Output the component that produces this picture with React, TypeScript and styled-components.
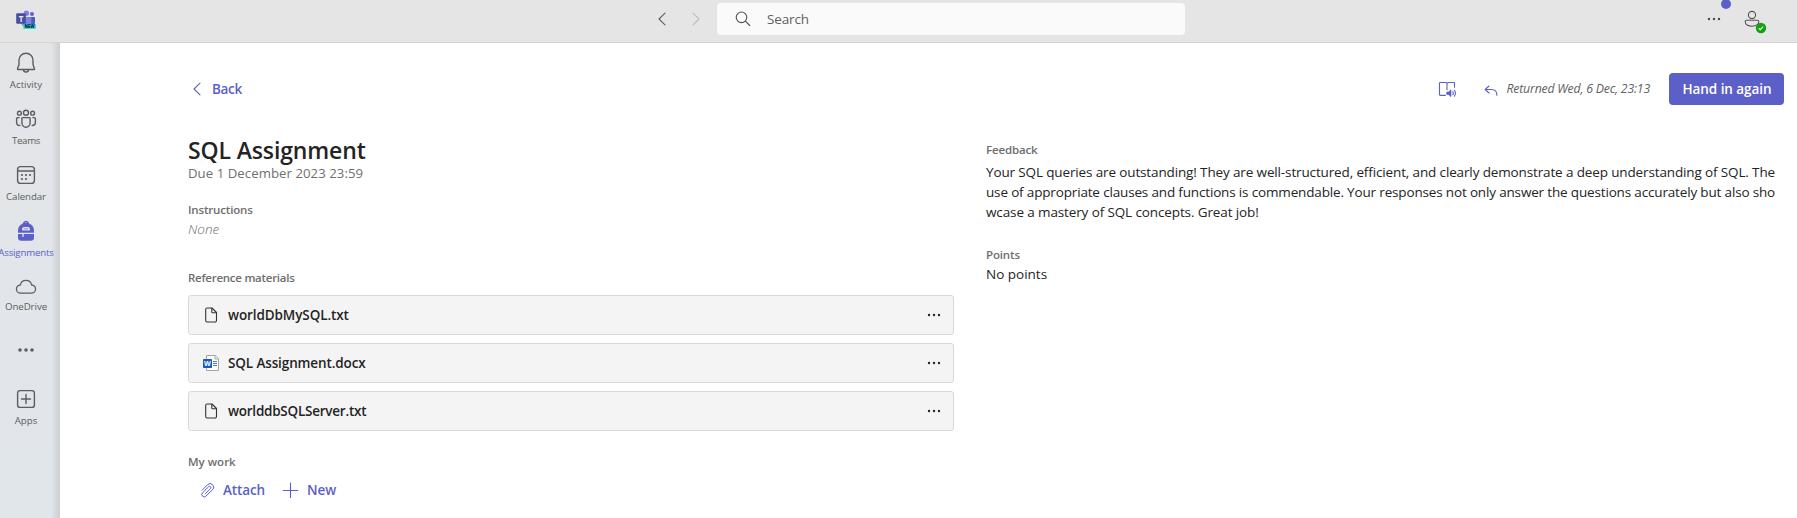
import React from "react";
import styled, { createGlobalStyle } from "styled-components";

const GlobalStyle = createGlobalStyle`
  * { box-sizing: border-box; }
  body { margin: 0; background: #fff; overflow: hidden; font-family: "Open Sans", "Noto Sans", sans-serif; }
  svg { display: block; flex: none; }
`;

const GREY = "#6e6e6e";
const BRAND = "#5b5fc7";

const Page = styled.div`
  height: 518px;
  display: flex;
  flex-direction: column;
`;

const Header = styled.header`
  height: 43px;
  flex: none;
  display: flex;
  align-items: flex-start;
  background: #e5e5e6;
  border-bottom: 1px solid #d4d4d6;
`;

const HeaderStart = styled.div`
  width: 717px;
  height: 38px;
  padding: 0 13px 0 15px;
  display: flex;
  align-items: center;
`;

const NavButtons = styled.div`
  margin-left: auto;
  display: flex;
  gap: 18px;
`;

const SearchBox = styled.div`
  width: 468px;
  height: 32px;
  margin-top: 3px;
  padding-left: 17px;
  display: flex;
  align-items: center;
  gap: 15px;
  background: #fafafa;
  border-radius: 4px;
`;

const HeaderEnd = styled.div`
  flex: 1;
  height: 38px;
  padding-right: 35px;
  display: flex;
  justify-content: flex-end;
  align-items: center;
  gap: 18px;
`;

const MoreWrap = styled.div`
  position: relative;
`;

const NoticeDot = styled.span`
  position: absolute;
  left: 17px;
  top: -12px;
  width: 10px;
  height: 10px;
  border-radius: 50%;
  background: ${BRAND};
`;

const Avatar = styled.div`
  position: relative;
`;

const Presence = styled.span`
  position: absolute;
  left: 13px;
  top: 13px;
`;

const Body = styled.div`
  flex: 1;
  min-height: 0;
  display: flex;
`;

const Rail = styled.nav`
  width: 60px;
  flex: none;
  padding-top: 1px;
  background:
    linear-gradient(to right, rgba(0, 0, 0, 0) 51px, rgba(0, 0, 0, 0.1) 60px),
    linear-gradient(to bottom, #e4e5e7 0%, #e2e5e9 45%, #e1e6ea 100%);
`;

const RailItem = styled.div<{ $active?: boolean }>`
  width: 52px;
  height: 56px;
  padding-top: 7px;
  display: flex;
  flex-direction: column;
  align-items: center;
  color: ${(p) => (p.$active ? BRAND : "#5c5d60")};
`;

const Glyph = styled.div<{ $h?: number }>`
  height: ${(p) => p.$h ?? 27}px;
  display: flex;
  align-items: flex-start;
`;

const MoreApps = styled(RailItem)`
  padding-top: 18px;
`;

const Main = styled.main`
  flex: 1;
  min-width: 0;
  padding: 30px 13px 0 128px;
  background: #fff;
`;

const Toolbar = styled.div`
  height: 32px;
  display: flex;
  align-items: center;
  justify-content: space-between;
`;

const BackLink = styled.div`
  display: flex;
  align-items: center;
  gap: 7px;
  padding-left: 1px;
`;

const Actions = styled.div`
  display: flex;
  align-items: center;
`;

const Returned = styled.div`
  display: flex;
  align-items: center;
  gap: 9px;
  margin: 0 19px 0 27px;
`;

const HandIn = styled.button`
  width: 115px;
  height: 32px;
  padding: 0 0 0 1px;
  border: 0;
  border-radius: 4px;
  display: flex;
  align-items: center;
  justify-content: center;
  background: ${BRAND};
  font-family: inherit;
`;

const Columns = styled.div`
  display: flex;
  gap: 32px;
  margin-top: 29px;
`;

const Left = styled.section`
  width: 766px;
  flex: none;
`;

const Right = styled.section`
  flex: 1;
  min-width: 0;
  padding-top: 6px;
`;

interface TextProps {
  $size?: number;
  $weight?: number;
  $color?: string;
  $line?: number;
  $ls?: number;
  $italic?: boolean;
  $mt?: number;
}

const Text = styled.div<TextProps>`
  width: max-content;
  font-size: ${(p) => p.$size ?? 13.5}px;
  font-weight: ${(p) => p.$weight ?? 400};
  font-style: ${(p) => (p.$italic ? "italic" : "normal")};
  color: ${(p) => p.$color ?? "#242424"};
  line-height: ${(p) => p.$line ?? 20}px;
  letter-spacing: ${(p) => p.$ls ?? 0}px;
  margin-top: ${(p) => p.$mt ?? 0}px;
  white-space: nowrap;
`;

const SectionLabel = styled(Text).attrs({ $size: 11.5, $weight: 600, $color: GREY })``;

const Paragraph = styled.div`
  margin-top: 2px;
`;

const Files = styled.div`
  display: flex;
  flex-direction: column;
  gap: 8px;
  margin-top: 7px;
`;

const FileRow = styled.div`
  height: 40px;
  padding: 0 11px 0 12px;
  display: flex;
  align-items: center;
  background: #f4f4f4;
  border: 1px solid #d9d9da;
  border-radius: 3px;
`;

const FileIcon = styled.div`
  width: 27px;
`;

const FileMore = styled.div`
  margin-left: auto;
`;

const WorkActions = styled.div`
  display: flex;
  align-items: center;
  margin-top: 8px;
  padding-left: 11px;
  gap: 16px;
`;

const WorkAction = styled.div<{ $gap: number }>`
  display: flex;
  align-items: center;
  gap: ${(p) => p.$gap}px;
`;

const Chevron = ({ dir, color }: { dir: "left" | "right"; color: string }) => (
  <svg width="16" height="16" viewBox="0 0 16 16" fill="none" stroke={color} strokeWidth="1.1" strokeLinecap="round" strokeLinejoin="round">
    <path d={dir === "left" ? "M11 2.2 L5 8 L11 13.8" : "M5 2.2 L11 8 L5 13.8"} />
  </svg>
);

const Dots = ({ r = 1.2, step = 5, color = "#242424", size = 16 }: { r?: number; step?: number; color?: string; size?: number }) => (
  <svg width={size} height="16" viewBox={`0 0 ${size} 16`} fill={color}>
    {[-1, 0, 1].map((i) => <circle key={i} cx={size / 2 + i * step} cy="8" r={r} />)}
  </svg>
);

const TeamsLogo = () => (
  <svg width="22" height="22" viewBox="0 0 22 22">
    <circle cx="17" cy="6" r="2" fill="#5b62c8" />
    <path d="M14.500 9h4.700a.8.8 0 0 1 .8.800V14a4 4 0 0 1-4 4h-1.500z" fill="#5059c9" />
    <circle cx="11.400" cy="5.200" r="2.700" fill="#7b83eb" />
    <path d="M7 9h8.500a.8.8 0 0 1 .8.800v4.700a4.900 4.900 0 0 1-9.900 0V9.600z" fill="#7b83eb" />
    <rect x="1.200" y="5.300" width="9.600" height="10.500" rx="1" fill="#484f9e" />
    <text x="6" y="13.500" textAnchor="middle" fontSize="8" fontWeight="700" fill="#e8e9ff">T</text>
    <rect x="8.200" y="16" width="12.800" height="5" rx=".8" fill="#35dde2" />
    <text x="9.400" y="20.200" fontSize="4.800" fontWeight="800" fill="#06252b" textLength="10.400" lengthAdjust="spacingAndGlyphs">NEW</text>
  </svg>
);

const stroke = { fill: "none", stroke: "currentColor", strokeWidth: 1.4, strokeLinecap: "round", strokeLinejoin: "round" } as const;

const Bell = () => (
  <svg width="24" height="24" viewBox="0 0 24 24" {...stroke}>
    <path d="M12 2.200a7 7 0 0 0-7 7v4.400l-1.500 4.200a.5.5 0 0 0 .5.700h16a.5.5 0 0 0 .5-.7L19 13.600V9.200a7 7 0 0 0-7-7z" />
    <path d="M9.500 18.600a2.500 2.500 0 0 0 5 0" />
  </svg>
);

const People = () => (
  <svg width="24" height="24" viewBox="0 0 24 24" {...stroke}>
    <circle cx="12" cy="5.700" r="2.500" />
    <circle cx="5.400" cy="6.200" r="1.900" />
    <circle cx="18.600" cy="6.200" r="1.900" />
    <path d="M8.800 10.600h6.400a.9.9 0 0 1 .9.900v4.600a4.100 4.100 0 0 1-8.200 0v-4.600a.9.9 0 0 1 .9-.9z" />
    <path d="M5.200 10.600H3.700a1.100 1.100 0 0 0-1.100 1.100v3.500a3.300 3.300 0 0 0 3.200 3.300" />
    <path d="M18.800 10.600h1.500a1.100 1.100 0 0 1 1.100 1.100v3.500a3.300 3.300 0 0 1-3.200 3.300" />
  </svg>
);

const Calendar = () => (
  <svg width="24" height="24" viewBox="0 0 24 24" {...stroke}>
    <rect x="3.600" y="3.600" width="16.800" height="16.800" rx="3" />
    <path d="M3.600 8h16.800" />
    <g fill="currentColor" stroke="none">
      <circle cx="8" cy="12" r="1.100" />
      <circle cx="12" cy="12" r="1.100" />
      <circle cx="16" cy="12" r="1.100" />
      <circle cx="8" cy="16" r="1.100" />
      <circle cx="12" cy="16" r="1.100" />
    </g>
  </svg>
);

const Backpack = () => (
  <svg width="24" height="24" viewBox="0 0 24 24" fill="currentColor">
    <path
      fillRule="evenodd"
      d="M12 1.800a3.300 3.300 0 0 0-3.200 2.600A8 8 0 0 0 4 11.600v2.200h16v-2.200a8 8 0 0 0-4.800-7.200A3.300 3.300 0 0 0 12 1.800zm0 1.500c.7 0 1.300.3 1.600.7a8 8 0 0 0-3.200 0c.3-.4.9-.7 1.600-.7zM10.300 8h3.400a2.300 2.300 0 0 1 2.300 2.300c0 .9-.4 1.300-1 1.300H9c-.6 0-1-.4-1-1.300A2.300 2.300 0 0 1 10.300 8z"
    />
    <path d="M9.800 9.300h4.400v1.100H9.800z" opacity=".6" />
    <path d="M4 15h4.300v2.300a.7.700 0 0 0 1.400 0V15H20v3.600a3.200 3.200 0 0 1-3.200 3.200H7.200A3.200 3.200 0 0 1 4 18.600z" />
  </svg>
);

const Cloud = () => (
  <svg width="24" height="24" viewBox="0 0 24 24" {...stroke} strokeWidth={1.3}>
    <path d="M6.700 18.200a4.100 4.100 0 0 1-.3-8.200 5.700 5.700 0 0 1 11.200 0 4.100 4.100 0 0 1-.3 8.200z" />
  </svg>
);

const AppsIcon = () => (
  <svg width="24" height="24" viewBox="0 0 24 24" {...stroke}>
    <rect x="3.600" y="3.600" width="16.800" height="16.800" rx="2.500" />
    <path d="M12 7.500v9M7.500 12h9" />
  </svg>
);

const DocIcon = () => (
  <svg width="20" height="20" viewBox="0 0 20 20" fill="none" stroke="#333" strokeWidth="1.1" strokeLinejoin="round">
    <path d="M6 3h5l4.500 4.500v8a1.500 1.500 0 0 1-1.500 1.500H6.200a1.500 1.500 0 0 1-1.500-1.500v-11A1.500 1.500 0 0 1 6 3z" />
    <path d="M10.800 3v3.800a1 1 0 0 0 1 1h3.700" />
  </svg>
);

const WordIcon = () => (
  <svg width="20" height="20" viewBox="0 0 20 20">
    <path d="M5.500 2.500h8.800l3.200 3.200v11.800h-12z" fill="#fff" stroke="#a5a5a5" />
    <path d="M14 2.500v3.500h3.500" fill="none" stroke="#a5a5a5" />
    <path d="M12 8.500h4M12 10.500h4M12 12.500h4" stroke="#3c7fd6" />
    <rect x="2" y="6" width="9" height="9" rx=".8" fill="#185abd" />
    <text x="6.500" y="13" textAnchor="middle" fontSize="7" fontWeight="700" fill="#fff">W</text>
  </svg>
);

const SearchIcon = () => (
  <svg width="18" height="18" viewBox="0 0 18 18" fill="none" stroke="#505050" strokeWidth="1.1" strokeLinecap="round">
    <circle cx="7.500" cy="7.300" r="5.300" />
    <path d="M11.400 11.200 L15.700 15.500" />
  </svg>
);

const PersonIcon = () => (
  <svg width="20" height="20" viewBox="0 0 20 20" fill="none" stroke="#555" strokeWidth="1.1">
    <circle cx="10" cy="6" r="3.600" />
    <path d="M4.500 11.300h11a1.300 1.300 0 0 1 1.300 1.300c0 2.900-2.800 4.600-6.800 4.600s-6.800-1.700-6.800-4.600a1.300 1.300 0 0 1 1.300-1.300z" />
  </svg>
);

const PresenceIcon = () => (
  <svg width="12" height="12" viewBox="0 0 12 12">
    <circle cx="6" cy="6" r="5.200" fill="#13a10e" />
    <path d="M3.800 6.200l1.500 1.400 2.800-2.900" fill="none" stroke="#fff" strokeWidth="1.2" />
  </svg>
);

const ReaderIcon = () => (
  <svg width="20" height="20" viewBox="0 0 20 20" fill="none" stroke={BRAND} strokeWidth="1.1">
    <path d="M8.800 16.400H3.300a.8.8 0 0 1-.8-.8V4.300a.8.8 0 0 1 .8-.8h5.500a1.200 1.200 0 0 1 1.200 1.200v6.500M10 4.700a1.200 1.200 0 0 1 1.200-1.200h5.500a.8.8 0 0 1 .8.800v4.500" />
    <path d="M9.700 13h1.800l2.500-2.300v7L11.500 15.500H9.700z" fill={BRAND} strokeWidth=".6" />
    <path d="M15.500 12.300a2.600 2.600 0 0 1 0 3.800M17 10.800a4.700 4.700 0 0 1 0 6.800" />
  </svg>
);

const ReplyIcon = () => (
  <svg width="14" height="16" viewBox="0 0 14 16" fill="none" stroke={BRAND} strokeWidth="1.1" strokeLinecap="round" strokeLinejoin="round">
    <path d="M5 5L1.200 8.500 5 12M1.200 8.500H8a4.800 4.800 0 0 1 4.800 4.800V14.300" />
  </svg>
);

const ClipIcon = () => (
  <svg width="18" height="18" viewBox="0 0 18 18" fill="none" stroke={BRAND} strokeWidth="1" strokeLinecap="round">
    <path d="M3 9.300l5.600-5.600a3.500 3.500 0 0 1 5 5l-6.700 6.500a2.400 2.400 0 0 1-3.400-3.400l6.200-6.100a1.300 1.300 0 0 1 1.900 1.900L6.400 12.700" />
  </svg>
);

const PlusIcon = () => (
  <svg width="18" height="18" viewBox="0 0 18 18" fill="none" stroke={BRAND} strokeWidth="1.1" strokeLinecap="round">
    <path d="M9.500 2v14.500M2.200 9.500h14.600" />
  </svg>
);

const railItems = [
  { label: "Activity", icon: <Bell />, ls: 0 },
  { label: "Teams", icon: <People />, ls: -0.3 },
  { label: "Calendar", icon: <Calendar />, ls: -0.1 },
  { label: "Assignments", icon: <Backpack />, ls: -0.18, active: true },
  { label: "OneDrive", icon: <Cloud />, ls: -0.07, h: 25 },
];

const files = [
  { name: "worldDbMySQL.txt", icon: <DocIcon />, ls: -0.1 },
  { name: "SQL Assignment.docx", icon: <WordIcon />, ls: -0.12 },
  { name: "worlddbSQLServer.txt", icon: <DocIcon />, ls: -0.24 },
];

const feedback = [
  { text: "Your SQL queries are outstanding! They are well-structured, efficient, and clearly demonstrate a deep understanding of SQL. The", ls: -0.135 },
  { text: "use of appropriate clauses and functions is commendable. Your responses not only answer the questions accurately but also sho", ls: -0.162 },
  { text: "wcase a mastery of SQL concepts. Great job!", ls: -0.12 },
];

export default function App() {
  return (
    <Page>
      <GlobalStyle />
      <Header>
        <HeaderStart>
          <TeamsLogo />
          <NavButtons>
            <Chevron dir="left" color="#5c5c5c" />
            <Chevron dir="right" color="#bcbcbc" />
          </NavButtons>
        </HeaderStart>
        <SearchBox>
          <SearchIcon />
          <Text $color="#616161" $ls={-0.15}>Search</Text>
        </SearchBox>
        <HeaderEnd>
          <MoreWrap>
            <Dots color="#4a4a4a" size={20} />
            <NoticeDot />
          </MoreWrap>
          <Avatar>
            <PersonIcon />
            <Presence><PresenceIcon /></Presence>
          </Avatar>
        </HeaderEnd>
      </Header>
      <Body>
        <Rail>
          {railItems.map((item) => (
            <RailItem key={item.label} $active={item.active}>
              <Glyph $h={item.h}>{item.icon}</Glyph>
              <Text $size={9.7} $line={14} $ls={item.ls} $color="inherit">{item.label}</Text>
            </RailItem>
          ))}
          <MoreApps>
            <Dots r={1.8} step={6} size={20} color="#5c5d60" />
          </MoreApps>
          <RailItem>
            <Glyph><AppsIcon /></Glyph>
            <Text $size={9.7} $line={14} $color="inherit">Apps</Text>
          </RailItem>
        </Rail>
        <Main>
          <Toolbar>
            <BackLink>
              <Chevron dir="left" color="#5f62a8" />
              <Text $weight={600} $color={BRAND} $ls={-0.35}>Back</Text>
            </BackLink>
            <Actions>
              <ReaderIcon />
              <Returned>
                <ReplyIcon />
                <Text $italic $size={12.3} $color="#616161" $ls={-0.21}>Returned Wed, 6 Dec, 23:13</Text>
              </Returned>
              <HandIn>
                <Text $weight={600} $color="#fff" $ls={-0.05}>Hand in again</Text>
              </HandIn>
            </Actions>
          </Toolbar>
          <Columns>
            <Left>
              <Text $size={23} $weight={600} $line={32} $ls={-0.13}>SQL Assignment</Text>
              <Text $size={13.2} $color="#707070" $mt={-3} $ls={0.05}>Due 1 December 2023 23:59</Text>
              <SectionLabel $mt={17} $ls={-0.17}>Instructions</SectionLabel>
              <Text $italic $color={GREY} $weight={300} $mt={-1}>None</Text>
              <SectionLabel $mt={29} $ls={-0.26}>Reference materials</SectionLabel>
              <Files>
                {files.map((file) => (
                  <FileRow key={file.name}>
                    <FileIcon>{file.icon}</FileIcon>
                    <Text $weight={600} $ls={file.ls}>{file.name}</Text>
                    <FileMore><Dots /></FileMore>
                  </FileRow>
                ))}
              </Files>
              <SectionLabel $mt={21}>My work</SectionLabel>
              <WorkActions>
                <WorkAction $gap={6}>
                  <ClipIcon />
                  <Text $weight={600} $color={BRAND} $ls={-0.12}>Attach</Text>
                </WorkAction>
                <WorkAction $gap={8}>
                  <PlusIcon />
                  <Text $weight={600} $color={BRAND}>New</Text>
                </WorkAction>
              </WorkActions>
            </Left>
            <Right>
              <SectionLabel $ls={-0.15}>Feedback</SectionLabel>
              <Paragraph>
                {feedback.map((line) => (
                  <Text key={line.text} $ls={line.ls}>{line.text}</Text>
                ))}
              </Paragraph>
              <SectionLabel $mt={23} $ls={-0.15}>Points</SectionLabel>
              <Text $mt={-1}>No points</Text>
            </Right>
          </Columns>
        </Main>
      </Body>
    </Page>
  );
}
